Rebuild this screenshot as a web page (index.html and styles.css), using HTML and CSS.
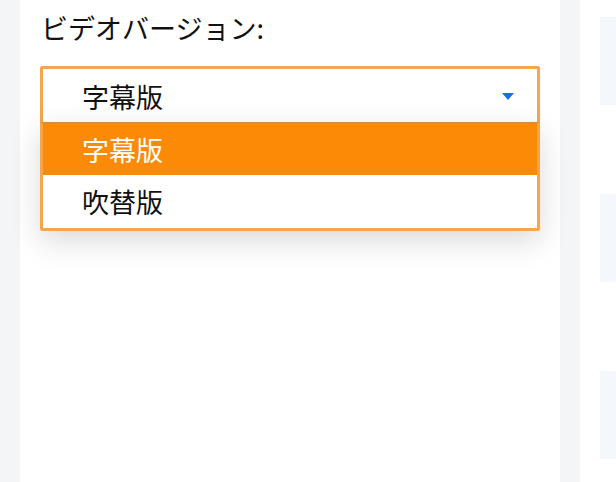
FILE: index.html
```html
<!DOCTYPE html>
<html lang="ja">
<head>
<meta charset="utf-8">
<link rel="stylesheet" href="styles.css">
</head>
<body>
<div class="page">
  <div class="main">
    <div class="label">ビデオバージョン:</div>
    <div class="select-wrap">
      <div class="select">
        <span class="value">字幕版</span>
        <svg class="arrow" width="12" height="7" viewBox="0 0 12 7"><path d="M0 0 H12 L6 7 Z" fill="#1a6ee6"/></svg>
      </div>
      <ul class="menu">
        <li class="opt active">字幕版</li>
        <li class="opt">吹替版</li>
      </ul>
    </div>
  </div>
  <div class="side">
    <div class="box"></div>
    <div class="box"></div>
    <div class="box"></div>
  </div>
</div>
</body>
</html>
```
FILE: styles.css
```css
html, body {
  margin: 0;
  padding: 0;
  background: #f4f5f7;
  font-family: "Noto Sans CJK JP", "Noto Sans", sans-serif;
  color: #111;
}
.page {
  display: flex;
  gap: 20px;
  padding-left: 20px;
  height: 482px;
  overflow: hidden;
}
.main {
  width: 540px;
  flex: none;
  background: #fff;
  padding: 9px 20px 0 20px;
  box-sizing: border-box;
}
.label {
  font-size: 27px;
  line-height: 38px;
  padding-left: 1px;
  margin-bottom: 19px;
}
.select-wrap {
  position: relative;
  width: 500px;
}
.select {
  box-sizing: border-box;
  height: 57px;
  border: 3px solid #f5a64d;
  border-bottom-width: 0;
  border-radius: 3px 3px 0 0;
  display: flex;
  align-items: center;
  justify-content: space-between;
  padding: 0 23px 0 39px;
  background: #fff;
}
.value {
  font-size: 27px;
  line-height: 1;
}
.arrow {
  display: block;
}
.menu {
  position: absolute;
  left: 0;
  top: 56px;
  width: 500px;
  box-sizing: border-box;
  margin: 0;
  padding: 0;
  list-style: none;
  border: 3px solid #f5a64d;
  border-top: 1px solid #d88a3b;
  border-radius: 0 0 3px 3px;
  background: #fff;
  box-shadow: 0 10px 30px rgba(0, 0, 0, 0.15);
}
.opt {
  height: 52px;
  display: flex;
  align-items: center;
  padding-left: 39px;
  font-size: 27px;
  line-height: 1;
}
.opt:last-child {
  height: 53px;
}
.opt.active {
  background: #fb8b06;
  color: #fff;
}
.side {
  flex: 1;
  background: #fff;
  padding: 17px 0 0 20px;
  display: flex;
  flex-direction: column;
  gap: 89px;
}
.box {
  height: 88px;
  background: #f4f8fd;
}
```
